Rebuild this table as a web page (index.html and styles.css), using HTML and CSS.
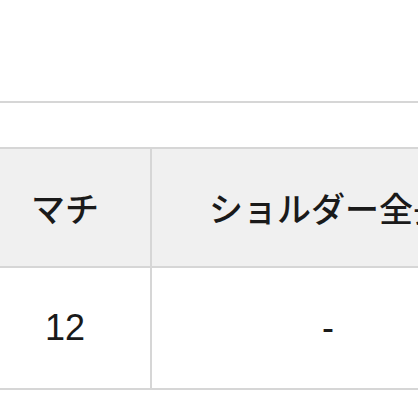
FILE: index.html
```html
<!DOCTYPE html>
<html lang="ja">
<head>
<meta charset="utf-8">
<link rel="stylesheet" href="styles.css">
</head>
<body>
<div class="page">
  <div class="top"></div>
  <div class="band"></div>
  <table class="spec">
    <thead>
      <tr>
        <th class="c1">マチ</th>
        <th class="c2">ショルダー全長</th>
      </tr>
    </thead>
    <tbody>
      <tr>
        <td class="c1">12</td>
        <td class="c2">-</td>
      </tr>
    </tbody>
  </table>
</div>
</body>
</html>
```
FILE: styles.css
```css
html, body {
  margin: 0;
  padding: 0;
  overflow: hidden;
  background: #ffffff;
}
.page {
  width: 418px;
  height: 418px;
  overflow: hidden;
  font-family: "Noto Sans CJK JP", "Noto Sans", sans-serif;
  color: #1a1a1a;
}
.top {
  height: 101px;
}
.band {
  height: 44px;
  border-top: 2px solid #d6d6d6;
}
.spec {
  border-collapse: collapse;
  table-layout: fixed;
  width: 522px;
  margin-left: -22px;
}
.spec th, .spec td {
  border: 2px solid #d6d6d6;
  text-align: center;
  vertical-align: middle;
  padding: 0;
  white-space: nowrap;
}
.spec th {
  background: #f0f0f0;
  height: 117px;
  font-size: 34px;
  font-weight: 500;
}
.spec td {
  background: #ffffff;
  height: 120px;
  font-family: "Liberation Sans", "Noto Sans CJK JP", sans-serif;
  font-size: 36px;
  font-weight: 400;
}
.c1 { width: 170px; }
.c2 { width: 352px; }
.dash { display: inline-block; }
```
